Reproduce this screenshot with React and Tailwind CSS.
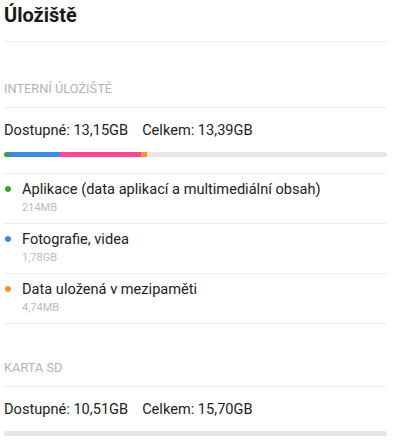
const font = { fontFamily: "Roboto, 'Noto Sans', sans-serif" };

const items = [
  { color: "bg-[#37a333]", title: "Aplikace (data aplikací a multimediální obsah)", size: "214MB" },
  { color: "bg-[#4a86df]", title: "Fotografie, videa", size: "1,78GB" },
  { color: "bg-[#f5922c]", title: "Data uložená v mezipaměti", size: "4,74MB" },
];

const SectionHeader = ({ label, h }) => (
  <div className={`${h} flex items-end pb-[8px] border-b border-[#eeeeee]`}>
    <span className="text-[12.8px] leading-[20px] text-[#b3b3b3]">{label}</span>
  </div>
);

const Usage = ({ free, total, segments }) => (
  <div className="pt-[12px] pb-[16px]">
    <div className="text-[14.6px] leading-[20px] text-[#222222]">
      Dostupné: {free}
      <span className="ml-[14px]">Celkem: {total}</span>
    </div>
    <div className="mt-[12px] h-[5px] w-full rounded-full bg-[#e6e6e6] flex overflow-hidden">
      {segments.map((s, i) => (
        <div key={i} className={`${s.w} ${s.c} h-full`} />
      ))}
    </div>
  </div>
);

export default function App() {
  return (
    <div className="w-[400px] h-[446px] bg-white overflow-hidden" style={font}>
      <div className="ml-[4px] w-[383px]">
        <div className="h-[42px] border-b border-[#eeeeee] pt-[1px]">
          <h1 className="text-[20px] leading-[28px] font-bold text-[#1a1a1a]">Úložiště</h1>
        </div>

        <SectionHeader label="INTERNÍ ÚLOŽIŠTĚ" h="h-[66px]" />

        <div className="border-b border-[#eeeeee]">
          <Usage
            free="13,15GB"
            total="13,39GB"
            segments={[
              { w: "w-[5px]", c: "bg-[#37a333]" },
              { w: "w-[51px]", c: "bg-[#4a86df]" },
              { w: "w-[81px]", c: "bg-[#f04c8e]" },
              { w: "w-[6px]", c: "bg-[#f5922c]" },
            ]}
          />
        </div>

        {items.map((it) => (
          <div key={it.title} className="h-[50px] border-b border-[#eeeeee] flex pt-[5px]">
            <div className="w-[18px] pl-[1px] pt-[7px]">
              <span className={`block w-[6px] h-[6px] rounded-full ${it.color}`} />
            </div>
            <div>
              <div className="text-[14.6px] leading-[20px] text-[#222222]">{it.title}</div>
              <div className="mt-[2px] text-[11px] leading-[14px] text-[#bbbbbb]">{it.size}</div>
            </div>
          </div>
        ))}

        <SectionHeader label="KARTA SD" h="h-[63px]" />

        <Usage free="10,51GB" total="15,70GB" segments={[]} />
      </div>
    </div>
  );
}
